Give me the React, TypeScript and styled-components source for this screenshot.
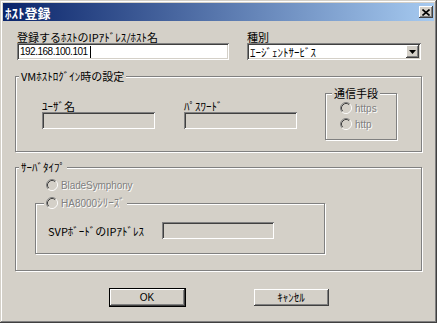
import styled, { createGlobalStyle } from "styled-components";

const GlobalStyle = createGlobalStyle`
  html, body {
    margin: 0;
    padding: 0;
    background: #fff;
  }
  body {
    font-family: "Noto Sans CJK JP", "Liberation Sans", sans-serif;
    font-size: 11px;
    color: #000;
  }
  * {
    box-sizing: border-box;
  }
`;

const Window = styled.div`
  width: 437px;
  height: 323px;
  padding: 3px;
  background: #d4d0c8;
  display: flex;
  flex-direction: column;
  box-shadow: inset -1px -1px #404040, inset 1px 1px #d4d0c8,
    inset -2px -2px #808080, inset 2px 2px #fff;
`;

const TitleBar = styled.div`
  height: 18px;
  padding: 0 1px 0 2px;
  display: flex;
  align-items: center;
  justify-content: space-between;
  background: linear-gradient(to right, #0a246a, #a6caf0);
`;

const Title = styled.span`
  color: #fff;
  font-weight: bold;
  font-size: 13px;
  line-height: 15px;
`;

const CloseButton = styled.div`
  width: 14px;
  height: 12px;
  background: #d4d0c8;
  display: flex;
  align-items: center;
  justify-content: center;
  box-shadow: inset -1px -1px #404040, inset 1px 1px #fff,
    inset -2px -2px #808080;
`;

const Body = styled.div`
  padding: 10px 12px 0 12px;
  display: flex;
  flex-direction: column;
`;

const TopRow = styled.div`
  display: grid;
  grid-template-columns: 212px 174px;
  column-gap: 18px;
  padding-left: 2px;
`;

const Field = styled.div<{ $width?: number }>`
  display: flex;
  flex-direction: column;
  width: ${({ $width }) => ($width ? `${$width}px` : "auto")};
`;

const Label = styled.div`
  line-height: 12px;
  white-space: nowrap;
`;

// MS UI Gothic's latin is narrow; a smaller Arial-width face with tighter spacing gets close
const Latin = styled.span<{ $spacing?: number }>`
  font-family: "Liberation Sans", sans-serif;
  font-size: 10px;
  letter-spacing: ${({ $spacing }) => $spacing ?? 0}px;
`;

const Sunken = styled.div<{ $disabled?: boolean }>`
  height: 17px;
  background: ${({ $disabled }) => ($disabled ? "#d4d0c8" : "#fff")};
  box-shadow: inset 1px 1px #808080, inset -1px -1px #fff,
    inset 2px 2px #404040, inset -2px -2px #d4d0c8;
`;

const TextBox = styled(Sunken)`
  display: flex;
  align-items: center;
  padding-left: 3px;
  line-height: 12px;
`;

const Caret = styled.span`
  display: inline-block;
  width: 1px;
  height: 12px;
  margin-left: 2px;
  background: #000;
`;

const SelectBox = styled(Sunken)`
  display: flex;
  align-items: center;
  justify-content: space-between;
  padding: 0 2px 0 3px;
  line-height: 12px;
`;

const ArrowButton = styled.div`
  width: 13px;
  height: 13px;
  background: #d4d0c8;
  display: flex;
  align-items: center;
  justify-content: center;
  box-shadow: inset -1px -1px #404040, inset 1px 1px #fff,
    inset -2px -2px #808080;
`;

const Group = styled.fieldset<{ $height: number; $top: number; $width?: number }>`
  margin: ${({ $top }) => $top}px 0 0 0;
  padding: 0;
  min-width: 0;
  height: ${({ $height }) => $height}px;
  width: ${({ $width }) => ($width ? `${$width}px` : "auto")};
  border: 1px solid #808080;
  box-shadow: inset 1px 1px #fff, 1px 1px #fff;
`;

const Legend = styled.legend<{ $offset: number }>`
  margin-left: ${({ $offset }) => $offset}px;
  padding: 0 2px;
  line-height: 13px;
  background: #d4d0c8;
  white-space: nowrap;
`;

const RadioLegend = styled.legend<{ $offset: number }>`
  margin-left: ${({ $offset }) => $offset}px;
  padding: 0 2px;
  background: #d4d0c8;
`;

const LoginRow = styled.div`
  display: flex;
  align-items: flex-start;
  padding: 4px 0 0 26px;
`;

const Credentials = styled.div`
  display: flex;
  gap: 29px;
  margin-top: 13px;
  margin-right: 28px;
`;

const RadioList = styled.div`
  display: flex;
  flex-direction: column;
  padding-left: 14px;
`;

const RadioRow = styled.div<{ $indent?: number; $top?: number }>`
  height: 16px;
  display: flex;
  align-items: center;
  gap: 3px;
  margin: ${({ $top }) => $top ?? 0}px 0 0 ${({ $indent }) => $indent ?? 0}px;
`;

const DisabledText = styled.span`
  color: #808080;
  text-shadow: 1px 1px #fff;
  line-height: 13px;
  white-space: nowrap;
`;

const ServerBody = styled.div`
  display: flex;
  flex-direction: column;
  align-items: flex-start;
  padding-left: 19px;
`;

const SvpRow = styled.div`
  display: flex;
  align-items: center;
  margin-top: 11px;
  padding-left: 12px;
`;

const SvpLabel = styled(Label)`
  width: 114px;
`;

const SvpInput = styled(Sunken)`
  width: 112px;
`;

const ButtonRow = styled.div`
  display: flex;
  align-items: center;
  justify-content: center;
  gap: 68px;
  margin-top: 17px;
`;

const Button = styled.div<{ $default?: boolean }>`
  width: ${({ $default }) => ($default ? 77 : 75)}px;
  height: ${({ $default }) => ($default ? 19 : 17)}px;
  display: flex;
  align-items: center;
  justify-content: center;
  background: #d4d0c8;
  border: ${({ $default }) => ($default ? "1px solid #000" : "none")};
  box-shadow: inset -1px -1px #404040, inset 1px 1px #fff,
    inset -2px -2px #808080;
  line-height: 13px;
`;

const Radio = () => (
  <svg width="12" height="12" viewBox="0 0 12 12">
    <circle cx="6" cy="6" r="5" fill="#d4d0c8" />
    <path d="M2.11 9.89 A5.5 5.5 0 0 1 9.89 2.11" fill="none" stroke="#808080" />
    <path d="M9.89 2.11 A5.5 5.5 0 0 1 2.11 9.89" fill="none" stroke="#fff" />
    <path d="M2.82 9.18 A4.5 4.5 0 0 1 9.18 2.82" fill="none" stroke="#404040" />
    <path d="M9.18 2.82 A4.5 4.5 0 0 1 2.82 9.18" fill="none" stroke="#d4d0c8" />
  </svg>
);

export default function App() {
  return (
    <>
      <GlobalStyle />
      <Window>
        <TitleBar>
          <Title>ﾎｽﾄ登録</Title>
          <CloseButton>
            <svg width="8" height="7" viewBox="0 0 8 7">
              <path d="M0.5 0.5 L7.5 6.5 M7.5 0.5 L0.5 6.5" stroke="#000" strokeWidth="1.6" />
            </svg>
          </CloseButton>
        </TitleBar>
        <Body>
          <TopRow>
            <Field>
              <Label>登録するﾎｽﾄのIPｱﾄﾞﾚｽ/ﾎｽﾄ名</Label>
              <TextBox>
                <Latin $spacing={-0.5}>192.168.100.101</Latin>
                <Caret />
              </TextBox>
            </Field>
            <Field>
              <Label>種別</Label>
              <SelectBox>
                <span>ｴｰｼﾞｪﾝﾄｻｰﾋﾞｽ</span>
                <ArrowButton>
                  <svg width="7" height="4" viewBox="0 0 7 4">
                    <polygon points="0,0 7,0 3.5,4" fill="#000" />
                  </svg>
                </ArrowButton>
              </SelectBox>
            </Field>
          </TopRow>

          <Group $top={10} $height={82}>
            <Legend $offset={3}>VMﾎｽﾄﾛｸﾞｲﾝ時の設定</Legend>
            <LoginRow>
              <Credentials>
                <Field $width={113}>
                  <Label>ﾕｰｻﾞ名</Label>
                  <Sunken $disabled />
                </Field>
                <Field $width={113}>
                  <Label>ﾊﾟｽﾜｰﾄﾞ</Label>
                  <Sunken $disabled />
                </Field>
              </Credentials>
              <Group $top={0} $height={53} $width={72}>
                <Legend $offset={6}>通信手段</Legend>
                <RadioList>
                  <RadioRow>
                    <Radio />
                    <DisabledText>
                      <Latin>https</Latin>
                    </DisabledText>
                  </RadioRow>
                  <RadioRow>
                    <Radio />
                    <DisabledText>
                      <Latin>http</Latin>
                    </DisabledText>
                  </RadioRow>
                </RadioList>
              </Group>
            </LoginRow>
          </Group>

          <Group $top={9} $height={110}>
            <Legend $offset={3}>ｻｰﾊﾞﾀｲﾌﾟ</Legend>
            <ServerBody>
              <RadioRow $indent={11} $top={3}>
                <Radio />
                <DisabledText>
                  <Latin $spacing={-0.1}>BladeSymphony</Latin>
                </DisabledText>
              </RadioRow>
              <Group $top={2} $height={59} $width={290}>
                <RadioLegend $offset={8}>
                  <RadioRow>
                    <Radio />
                    <DisabledText>
                      <Latin>HA8000</Latin>ｼﾘｰｽﾞ
                    </DisabledText>
                  </RadioRow>
                </RadioLegend>
                <SvpRow>
                  <SvpLabel>SVPﾎﾞｰﾄﾞのIPｱﾄﾞﾚｽ</SvpLabel>
                  <SvpInput $disabled />
                </SvpRow>
              </Group>
            </ServerBody>
          </Group>

          <ButtonRow>
            <Button $default>
              <Latin>OK</Latin>
            </Button>
            <Button>ｷｬﾝｾﾙ</Button>
          </ButtonRow>
        </Body>
      </Window>
    </>
  );
}
